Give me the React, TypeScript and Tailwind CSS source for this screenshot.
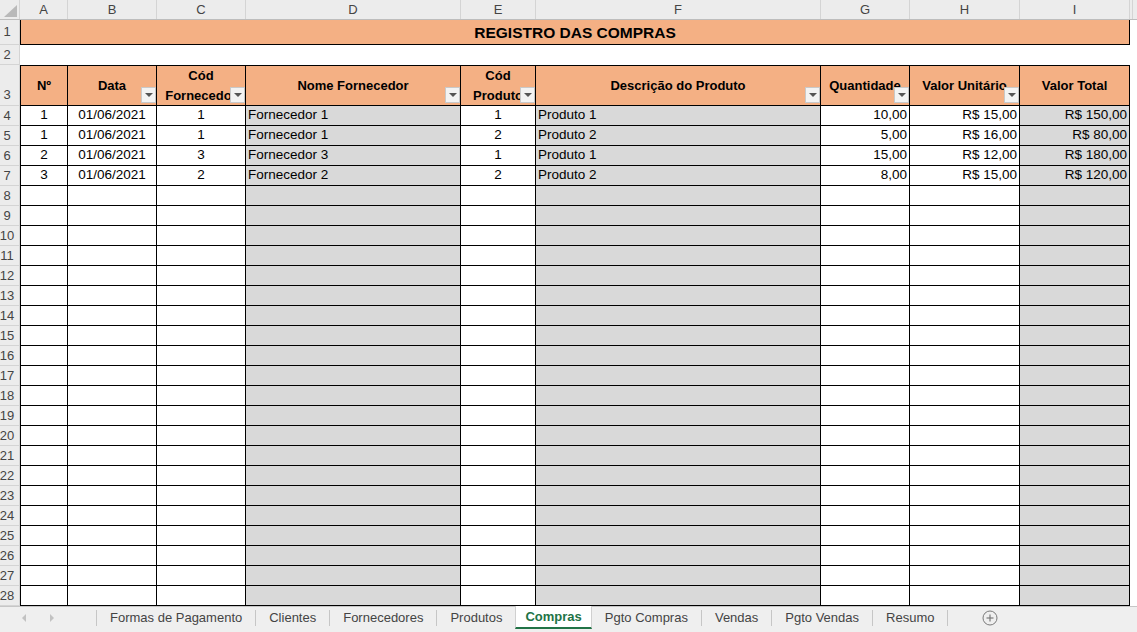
import React from "react";

type Col = {
  key: string;
  w: string;
  title: string[];
  align: "left" | "center" | "right";
  filter: boolean;
  fill: boolean;
};

const cols: Col[] = [
  { key: "A", w: "w-[48px]", title: ["Nº"], align: "center", filter: false, fill: false },
  { key: "B", w: "w-[89px]", title: ["Data"], align: "center", filter: true, fill: false },
  { key: "C", w: "w-[89px]", title: ["Cód", "Fornecedor"], align: "center", filter: true, fill: false },
  { key: "D", w: "w-[215px]", title: ["Nome Fornecedor"], align: "left", filter: true, fill: true },
  { key: "E", w: "w-[75px]", title: ["Cód", "Produto"], align: "center", filter: true, fill: false },
  { key: "F", w: "w-[285px]", title: ["Descrição do Produto"], align: "left", filter: true, fill: true },
  { key: "G", w: "w-[89px]", title: ["Quantidade"], align: "right", filter: true, fill: false },
  { key: "H", w: "w-[110px]", title: ["Valor Unitário"], align: "right", filter: true, fill: false },
  { key: "I", w: "w-[110px]", title: ["Valor Total"], align: "right", filter: false, fill: true },
];

// linhas com dados (linhas 4 a 7)
const dados: string[][] = [
  ["1", "01/06/2021", "1", "Fornecedor 1", "1", "Produto 1", "10,00", "R$ 15,00", "R$ 150,00"],
  ["1", "01/06/2021", "1", "Fornecedor 1", "2", "Produto 2", "5,00", "R$ 16,00", "R$ 80,00"],
  ["2", "01/06/2021", "3", "Fornecedor 3", "1", "Produto 1", "15,00", "R$ 12,00", "R$ 180,00"],
  ["3", "01/06/2021", "2", "Fornecedor 2", "2", "Produto 2", "8,00", "R$ 15,00", "R$ 120,00"],
];

const abas = [
  "Formas de Pagamento",
  "Clientes",
  "Fornecedores",
  "Produtos",
  "Compras",
  "Pgto Compras",
  "Vendas",
  "Pgto Vendas",
  "Resumo",
];
const abaAtiva = "Compras";

const alignClass = {
  left: "justify-start pl-[2px]",
  center: "justify-center",
  right: "justify-end pr-[2px]",
};

function RowHeader({ n, h, end }: { n: number; h: string; end?: boolean }) {
  return (
    <div
      className={`${h} w-[20px] shrink-0 bg-[#ececec] border-r border-b border-[#d4d4d4] flex justify-center pr-[5px] text-[13px] text-[#444] ${
        end ? "items-end pb-px" : "items-center"
      }`}
    >
      {n}
    </div>
  );
}

function FilterButton() {
  return (
    <div className="absolute right-0 bottom-[2px] w-[15px] h-[16px] bg-[#f3f3f3] border border-[#c9c9c9] flex items-center justify-center">
      <div className="w-0 h-0 border-x-[4px] border-x-transparent border-t-[4px] border-t-[#555]" />
    </div>
  );
}

export default function App() {
  const linhasVazias = Array.from({ length: 21 }, (_, i) => i + 8);

  return (
    <div
      className="w-[1137px] h-[632px] overflow-hidden flex flex-col bg-white text-black"
      style={{ fontFamily: '"Liberation Sans", Arial, sans-serif' }}
    >
      {/* cabeçalho das colunas */}
      <div className="flex h-[20px] shrink-0 bg-[#ececec] border-b border-[#bdbdbd]">
        <div className="relative w-[20px] shrink-0 border-r border-[#d4d4d4]">
          <svg className="absolute right-[2px] bottom-[2px]" width="13" height="12" viewBox="0 0 13 12">
            <polygon points="13,0 13,12 0,12" fill="#b9b9b9" />
          </svg>
        </div>
        {cols.map((c) => (
          <div
            key={c.key}
            className={`${c.w} shrink-0 border-r border-[#d4d4d4] flex items-center justify-center text-[13px] text-[#444]`}
          >
            {c.key}
          </div>
        ))}
        <div className="flex-1 border-l border-[#d4d4d4] ml-[2px]" />
      </div>

      {/* linha 1 - título */}
      <div className="flex h-[25px] shrink-0">
        <RowHeader n={1} h="h-[25px]" />
        <div className="w-[1110px] shrink-0 bg-[#f4b084] border-l border-r border-b border-black flex items-center justify-center pt-px font-bold text-[15.5px]">
          REGISTRO DAS COMPRAS
        </div>
        <div className="flex-1" />
      </div>

      {/* linha 2 */}
      <div className="flex h-[20px] shrink-0">
        <RowHeader n={2} h="h-[20px]" />
        <div className="flex-1" />
      </div>

      {/* linha 3 - cabeçalho da tabela */}
      <div className="flex h-[41px] shrink-0">
        <RowHeader n={3} h="h-[41px]" end />
        {cols.map((c) => (
          <div
            key={c.key}
            className={`${c.w} relative shrink-0 overflow-hidden bg-[#f4b084] border-t border-r border-b border-black flex flex-col items-center justify-center font-bold text-[13px] leading-[20px] whitespace-nowrap ${
              c.key === "A" ? "border-l" : ""
            }`}
          >
            {c.title.map((t) => (
              <span key={t}>{t}</span>
            ))}
            {c.filter && <FilterButton />}
          </div>
        ))}
        <div className="flex-1" />
      </div>

      {/* linhas de dados */}
      {dados.map((linha, i) => (
        <div key={i} className="flex h-[20px] shrink-0">
          <RowHeader n={i + 4} h="h-[20px]" />
          {cols.map((c, j) => (
            <div
              key={c.key}
              className={`${c.w} shrink-0 overflow-hidden whitespace-nowrap border-r border-b border-black flex items-center text-[13.5px] ${
                alignClass[c.align]
              } ${c.fill ? "bg-[#d9d9d9]" : "bg-white"} ${c.key === "A" ? "border-l" : ""}`}
            >
              {linha[j]}
            </div>
          ))}
          <div className="flex-1" />
        </div>
      ))}

      {linhasVazias.map((n) => (
        <div key={n} className="flex h-[20px] shrink-0">
          <RowHeader n={n} h="h-[20px]" />
          {cols.map((c) => (
            <div
              key={c.key}
              className={`${c.w} shrink-0 border-r border-b border-black ${c.fill ? "bg-[#d9d9d9]" : "bg-white"} ${
                c.key === "A" ? "border-l" : ""
              }`}
            />
          ))}
          <div className="flex-1" />
        </div>
      ))}

      {/* barra de abas */}
      <div className="h-[26px] shrink-0 bg-[#efefef] border-t border-[#c6c6c6] pb-[3px] flex items-stretch text-[13px] text-[#444]">
        <div className="w-[96px] shrink-0 flex items-center">
          <div className="ml-[22px] w-0 h-0 border-y-[4px] border-y-transparent border-r-[4px] border-r-[#c2c2c2]" />
          <div className="ml-[24px] w-0 h-0 border-y-[4px] border-y-transparent border-l-[4px] border-l-[#c2c2c2]" />
        </div>
        {abas.map((a, i) => {
          const ativa = a === abaAtiva;
          const anteriorAtiva = i > 0 && abas[i - 1] === abaAtiva;
          return (
            <React.Fragment key={a}>
              {!ativa && !anteriorAtiva && (
                <div className="w-px h-[16px] self-center bg-[#c6c6c6] shrink-0" />
              )}
              {ativa ? (
                <div className="px-[9px] -mt-px bg-white border-x border-[#d0d0d0] border-b-2 border-b-[#217346] flex items-center font-bold text-[#217346]">
                  {a}
                </div>
              ) : (
                <div className="px-[13px] flex items-center">{a}</div>
              )}
            </React.Fragment>
          );
        })}
        <div className="w-px h-[16px] self-center bg-[#c6c6c6] shrink-0" />
        <div className="ml-[34px] flex items-center">
          <svg width="16" height="16" viewBox="0 0 16 16">
            <circle cx="8" cy="8" r="7" fill="none" stroke="#7a7a7a" strokeWidth="1" />
            <line x1="8" y1="4.5" x2="8" y2="11.5" stroke="#7a7a7a" strokeWidth="1.2" />
            <line x1="4.5" y1="8" x2="11.5" y2="8" stroke="#7a7a7a" strokeWidth="1.2" />
          </svg>
        </div>
      </div>
    </div>
  );
}
